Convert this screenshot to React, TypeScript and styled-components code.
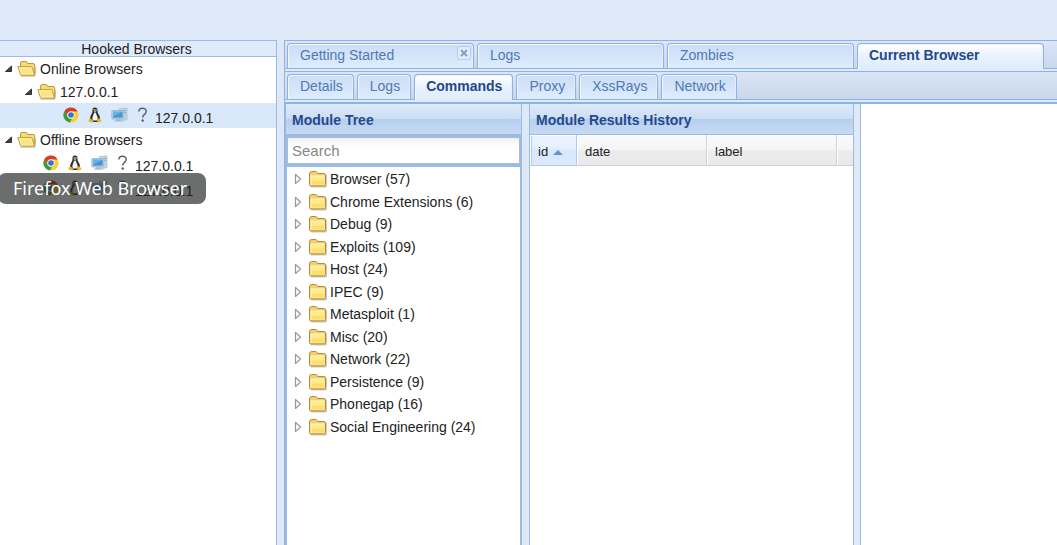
import React from "react";
import styled, { createGlobalStyle, css } from "styled-components";

const GlobalStyle = createGlobalStyle`
  *, *::before, *::after { box-sizing: border-box; }
  body {
    margin: 0;
    background: #dfe8f6;
    color: #222;
    font: 14px/20px "Liberation Sans", Arial, sans-serif;
  }
  button, input { font: inherit; margin: 0; }
  ul { list-style: none; margin: 0; padding: 0; }
`;

const Page = styled.div`
  display: flex;
  flex-direction: column;
  min-height: 100vh;
  overflow: hidden;
`;

const TopBar = styled.header`
  height: 40px;
  background: #dfe8f6;
`;

const Workspace = styled.div`
  flex: 1;
  display: grid;
  grid-template-columns: 277px minmax(0, 1fr);
  column-gap: 7px;
`;

const Sidebar = styled.aside`
  position: relative;
  background: #fff;
  border: 1px solid #99bbe8;
  border-width: 1px 1px 0 0;
`;

const SidebarTitle = styled.h2`
  margin: 0;
  height: 16px;
  padding-right: 3px;
  border-bottom: 1px solid #99bbe8;
  background: #dfebfb;
  color: #222;
  font-size: 14px;
  font-weight: 400;
  line-height: 16px;
  text-align: center;
`;

const FolderRow = styled.div<{ $depth: number }>`
  display: flex;
  align-items: center;
  gap: 3px;
  height: 23px;
  padding-left: ${(p) => 3 + p.$depth * 20}px;
`;

const LeafRow = styled.div<{ $depth: number; $selected?: boolean }>`
  display: flex;
  align-items: center;
  gap: 8px;
  height: 25px;
  padding-left: ${(p) => 23 + p.$depth * 20}px;
  background: ${(p) => (p.$selected ? "#d9e8fb" : "transparent")};
  svg { margin-bottom: 2px; }
`;

const LeafLabel = styled.span`
  margin-left: -3px;
  padding-top: 4px;
`;

const Tooltip = styled.div`
  position: absolute;
  top: 132px;
  left: -2px;
  width: 208px;
  height: 31px;
  padding-left: 15px;
  border-radius: 8px;
  background: rgba(30, 35, 34, 0.66);
  color: #fff;
  font: 18px/30px "Noto Sans", "Open Sans", sans-serif;
  white-space: nowrap;
`;

const Main = styled.main`
  display: flex;
  flex-direction: column;
  border: 1px solid #8db2e3;
  border-width: 1px 0 0 1px;
  background: #deecfd;
  overflow: hidden;
`;

const TabStrip = styled.div`
  display: flex;
  align-items: flex-end;
  gap: 3px;
  height: 28px;
  padding-left: 2px;
  border-bottom: 1px solid #8db2e3;
  background: linear-gradient(#dbe5f5, #c9d7ed);
`;

const StripSpacer = styled.div`
  height: 3px;
  border-bottom: 1px solid #8db2e3;
  background: #deecfd;
`;

const Tab = styled.button<{ $active?: boolean; $wide?: boolean }>`
  display: flex;
  flex: none;
  align-items: center;
  justify-content: space-between;
  height: 25px;
  padding: 0 10px 2px 12px;
  border: 1px solid #8db2e3;
  border-bottom: 0;
  border-radius: 4px 4px 0 0;
  background: linear-gradient(#cbddf6, #deecfd);
  box-shadow: inset 1px 1px #f0f6fe, inset -1px 0 #e6f0fd;
  color: #5079b3;
  line-height: 22px;
  white-space: nowrap;
  ${(p) => p.$wide && css`width: 187px; padding-right: 2px;`}
  ${(p) =>
    p.$active &&
    css`
      height: 26px;
      margin-bottom: -1px;
      padding-bottom: 4px;
      padding-left: 11px;
      background: linear-gradient(#fff, #e9f2fe 50%, #deecfd);
      color: #25478b;
      font-weight: 700;
    `}
`;

const CloseBox = styled.span`
  display: flex;
  align-items: center;
  justify-content: center;
  width: 14px;
  height: 14px;
  margin-bottom: 4px;
  border: 1px solid #b5cdee;
  border-radius: 3px;
  background: #e2edfb;
`;

const Panes = styled.div`
  flex: 1;
  display: grid;
  grid-template-columns: 237px 325px minmax(0, 1fr);
  column-gap: 7px;
  border-top: 1px solid #8db2e3;
  background: #dfe8f6;
`;

const ModulePane = styled.section`
  display: flex;
  flex-direction: column;
  padding: 0 2px;
  background: #99bbe8;
`;

const Pane = styled.section<{ $last?: boolean }>`
  margin-left: ${(p) => (p.$last ? "-1px" : "0")};
  border: 1px solid #99bbe8;
  border-width: ${(p) => (p.$last ? "0 0 0 1px" : "0 1px")};
  background: #fff;
`;

const PaneTitle = styled.h2<{ $inset?: boolean }>`
  height: 31px;
  margin: 0 ${(p) => (p.$inset ? "-1px" : "0")};
  padding: 0 6px;
  border-bottom: 1px solid #99bbe8;
  background: linear-gradient(#deebf8, #cbdef3 48%, #b6cfee 50%, #c7daf3);
  color: #24498e;
  font-size: 14px;
  line-height: 33px;
`;

const SearchInput = styled.input`
  width: 100%;
  height: 27px;
  margin: 2px 0 3px;
  padding: 0 4px;
  border: 1px solid #b5b8c8;
  border-radius: 0;
  background: linear-gradient(#efefef, #fff 8px);
  font-size: 15px;
  color: #222;
  outline: 0;
  &::placeholder { color: #878787; opacity: 1; }
`;

const ModuleArea = styled.div`
  flex: 1;
  padding-top: 1px;
  background: #fff;
`;

const ModuleList = styled.ul`
  display: grid;
  grid-template-rows: repeat(12, 1fr);
  height: 270px;
`;

const ModuleItem = styled.li`
  display: flex;
  align-items: center;
  gap: 3px;
  padding-left: 5px;
  white-space: nowrap;
`;

const ResultsTable = styled.table`
  width: 100%;
  table-layout: fixed;
  border-collapse: separate;
  border-spacing: 0;
`;

const HeadCell = styled.th<{ $width?: number; $sorted?: boolean }>`
  width: ${(p) => (p.$width ? `${p.$width}px` : "auto")};
  height: 31px;
  padding: 3px 8px 0;
  border-right: ${(p) => (p.$width ? "1px solid #d0d0d0" : "0")};
  border-bottom: 1px solid #d0d0d0;
  background: linear-gradient(#fafafa, #f6f6f6 45%, #ececec 55%, #e8e9eb);
  box-shadow: inset 1px 1px #fff;
  font-size: 13px;
  font-weight: 400;
  text-align: left;
  white-space: nowrap;
  svg { margin-left: 5px; }
  ${(p) =>
    p.$sorted &&
    css`
      border-color: #aaccf6;
      background: linear-gradient(#ebf3fd, #e6f0fd 45%, #d9e8fb 50%);
      box-shadow: inset 1px 1px #fff, inset 2px 0 #aaccf6;
    `}
`;

const OpenArrow = () => (
  <svg width="11" height="10" viewBox="0 0 11 10" aria-hidden="true">
    <path d="M2.500 7.500 8.500 2V7.500Z" fill="#444" stroke="#333" strokeLinejoin="round" />
  </svg>
);

const ClosedArrow = () => (
  <svg width="13" height="14" viewBox="0 0 13 14" aria-hidden="true">
    <path d="M3.500 2.500v9l5-4.500Z" fill="#fff" stroke="#999" strokeWidth="1.200" strokeLinejoin="round" />
  </svg>
);

const OpenFolder = () => (
  <svg width="20" height="17" viewBox="0 0 20 17" aria-hidden="true">
    <path d="M3 16.200h14.800l1-9" fill="none" stroke="#777" strokeOpacity=".45" />
    <path d="M3.500 14V3.200q0-1.700 1.700-1.700h3.600q1.200 0 1.600 1.300l.3.700h5.500q1.500 0 1.500 1.500v10H4.500Z" fill="#f6d978" stroke="#bd9532" />
    <path d="M.9 6.600h12.900q1 0 1.300 1l2.500 7.600H4.400q-.8 0-1-.8Z" fill="#fff1a4" stroke="#c59b34" />
    <path d="m3 8.200 1.600 5.600h10.800L13.800 8.200Z" fill="#fbe487" />
  </svg>
);

const ClosedFolder = () => (
  <svg width="19" height="18" viewBox="0 0 19 18" aria-hidden="true">
    <path d="M3 16.900h15.300V5" fill="none" stroke="#777" strokeOpacity=".5" />
    <path d="M1.500 14.600V4q0-2.500 2-2.500h4q1.300 0 1.700 1.200l.4.800h6.300q1.600 0 1.600 1.600v9.500q0 1.400-1.400 1.400H2.900q-1.400 0-1.400-1.400Z" fill="#f3cf74" stroke="#b28a35" />
    <path d="M2.500 5.500h14v9.500h-14Z" fill="#fff6b4" />
    <path d="M3.500 6.700h12.500v7.800H3.500Z" fill="#fdec8c" />
    <path d="M3.500 10.500h12.500v4.200H3.500Z" fill="#fbd967" opacity=".75" />
  </svg>
);

const ChromeIcon = () => (
  <svg width="16" height="16" viewBox="0 0 16 16" aria-label="Chrome">
    <circle cx="8" cy="8" r="7.600" fill="#f7cf32" />
    <path d="M1.400 4.200A7.600 7.600 0 0 1 14.600 4.400H8A3.600 3.600 0 0 0 4.800 9.600Z" fill="#d93a2c" />
    <path d="M1.400 4.200 4.900 9.800A3.600 3.600 0 0 0 9 11.500L6.900 15.500A7.600 7.600 0 0 1 1.400 4.200Z" fill="#3a9a45" />
    <circle cx="8" cy="8" r="3.700" fill="#f5f7fa" />
    <circle cx="8" cy="8" r="2.800" fill="#3c74c4" />
  </svg>
);

const LinuxIcon = () => (
  <svg width="16" height="16" viewBox="0 0 16 16" aria-label="Linux">
    <path d="M8 .5c-1.800 0-2.600 1.200-2.500 3 .1 2-.4 2.600-1.300 4.200-.8 1.500-1.300 3-1.100 4.800L6 15h4.600l2.400-2.600c.2-2-.4-3.400-1.400-4.900-.9-1.400-1.100-2.200-1.100-4C10.500 1.500 9.800.5 8 .5Z" fill="#2b2b2d" />
    <path d="M8 5.300c-1.200.5-1.300 2-2 3.400-.8 1.700-.9 3.200 0 4.800h4.200c.8-1.700.6-3.400-.3-5C9.200 7.200 9 5.800 8 5.300Z" fill="#f4f4f4" />
    <circle cx="7.200" cy="3" r=".7" fill="#fff" />
    <circle cx="9" cy="3" r=".7" fill="#fff" />
    <path d="m6.800 4.300 1.300-.6 1.400.6-1.400 1.100ZM3.500 11.200l2.900 2.700c.3 1.100-.4 1.700-1.600 1.500l-3-.8c-.6-.4-.1-1.200-.1-2ZM12.500 11.200l2 2.200c.4.500-.1.900-.7 1.200l-2.100.9c-1.200.2-1.700-.4-1.600-1.600l.4-2.300Z" fill="#eab22c" />
  </svg>
);

const ComputerIcon = () => (
  <svg width="17" height="16" viewBox="0 0 17 16" aria-label="Computer">
    <path d="M8.500 1.500 16 1v11.500l-5.500 1.500h-2Z" fill="#c7d5e0" stroke="#a8bac9" strokeWidth=".7" />
    <path d="M12.500 3.500H15M13.500 5.500H15" stroke="#8fa3b4" />
    <rect x=".8" y="3.500" width="12" height="8.500" rx=".8" fill="#b5d2ea" stroke="#93b5d0" strokeWidth=".8" />
    <rect x="2" y="4.700" width="9.600" height="6" fill="#4597d5" />
    <path d="M2 4.700h9.600L2 9.600Z" fill="#68b2e5" />
    <path d="M5 12.300h3.600l1 1.700H4Z" fill="#a3b2bf" />
    <path d="M3 14.300h9" stroke="#bfcad3" />
  </svg>
);

const UnknownIcon = () => (
  <svg width="14" height="16" viewBox="0 0 14 16" aria-label="Unknown hardware">
    <path d="M2.900 4.500C2.700 2.300 4.300 1.300 6.400 1.300c2.300 0 3.800 1.200 3.800 3.100 0 2.900-3.500 3-3.500 6" fill="none" stroke="#5e6266" strokeWidth="1.500" />
    <circle cx="6.700" cy="13.500" r="1.200" fill="#55595d" />
  </svg>
);

const SortArrow = () => (
  <svg width="10" height="6" viewBox="0 0 10 6" aria-hidden="true">
    <path d="M5 0 10 5H0Z" fill="#6593cf" />
  </svg>
);

function Folder({ depth, label }: { depth: number; label: string }) {
  return (
    <FolderRow $depth={depth}>
      <OpenArrow />
      <OpenFolder />
      <span>{label}</span>
    </FolderRow>
  );
}

function BrowserLeaf({ depth, selected }: { depth: number; selected?: boolean }) {
  return (
    <LeafRow $depth={depth} $selected={selected}>
      <ChromeIcon />
      <LinuxIcon />
      <ComputerIcon />
      <UnknownIcon />
      <LeafLabel>127.0.0.1</LeafLabel>
    </LeafRow>
  );
}

const mainTabs = ["Getting Started", "Logs", "Zombies", "Current Browser"];
const subTabs = ["Details", "Logs", "Commands", "Proxy", "XssRays", "Network"];
const modules = [
  "Browser (57)",
  "Chrome Extensions (6)",
  "Debug (9)",
  "Exploits (109)",
  "Host (24)",
  "IPEC (9)",
  "Metasploit (1)",
  "Misc (20)",
  "Network (22)",
  "Persistence (9)",
  "Phonegap (16)",
  "Social Engineering (24)",
];

export default function App() {
  return (
    <>
      <GlobalStyle />
      <Page>
        <TopBar />
        <Workspace>
          <Sidebar>
            <SidebarTitle>Hooked Browsers</SidebarTitle>
            <Folder depth={0} label="Online Browsers" />
            <Folder depth={1} label="127.0.0.1" />
            <BrowserLeaf depth={2} selected />
            <Folder depth={0} label="Offline Browsers" />
            <BrowserLeaf depth={1} />
            <BrowserLeaf depth={1} />
            <Tooltip role="tooltip">Firefox Web Browser</Tooltip>
          </Sidebar>
          <Main>
            <TabStrip role="tablist">
              {mainTabs.map((name) => (
                <Tab
                  key={name}
                  type="button"
                  role="tab"
                  $wide
                  $active={name === "Current Browser"}
                  aria-selected={name === "Current Browser"}
                >
                  {name}
                  {name === "Getting Started" && (
                    <CloseBox>
                      <svg width="8" height="8" viewBox="0 0 8 8" aria-hidden="true">
                        <path d="m1 1 6 6M7 1 1 7" stroke="#7f9fca" strokeWidth="2" />
                      </svg>
                    </CloseBox>
                  )}
                </Tab>
              ))}
            </TabStrip>
            <StripSpacer />
            <TabStrip role="tablist">
              {subTabs.map((name) => (
                <Tab
                  key={name}
                  type="button"
                  role="tab"
                  $active={name === "Commands"}
                  aria-selected={name === "Commands"}
                >
                  {name}
                </Tab>
              ))}
            </TabStrip>
            <StripSpacer />
            <Panes>
              <ModulePane>
                <PaneTitle $inset>Module Tree</PaneTitle>
                <SearchInput type="text" placeholder="Search" aria-label="Search modules" />
                <ModuleArea>
                  <ModuleList>
                    {modules.map((name) => (
                      <ModuleItem key={name}>
                        <ClosedArrow />
                        <ClosedFolder />
                        <span>{name}</span>
                      </ModuleItem>
                    ))}
                  </ModuleList>
                </ModuleArea>
              </ModulePane>
              <Pane>
                <PaneTitle>Module Results History</PaneTitle>
                <ResultsTable>
                  <thead>
                    <tr>
                      <HeadCell $width={47} $sorted aria-sort="ascending">
                        id
                        <SortArrow />
                      </HeadCell>
                      <HeadCell $width={130}>date</HeadCell>
                      <HeadCell $width={130}>label</HeadCell>
                      <HeadCell />
                    </tr>
                  </thead>
                </ResultsTable>
              </Pane>
              <Pane $last />
            </Panes>
          </Main>
        </Workspace>
      </Page>
    </>
  );
}
